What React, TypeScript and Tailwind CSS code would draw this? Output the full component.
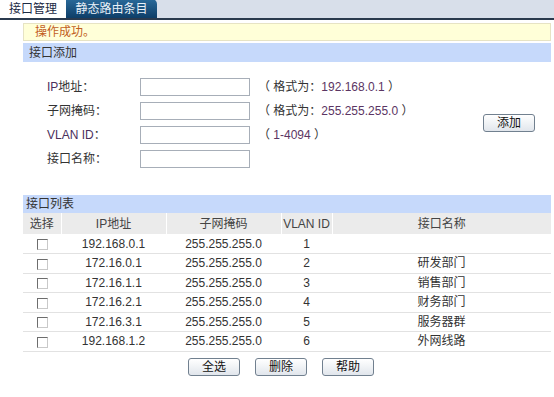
import React from 'react';

// Interface row shape for the list table
interface IfaceRow {
  ip: string;
  mask: string;
  vlan: number;
  name: string;
}

const rows: IfaceRow[] = [
  { ip: '192.168.0.1', mask: '255.255.255.0', vlan: 1, name: '' },
  { ip: '172.16.0.1', mask: '255.255.255.0', vlan: 2, name: '研发部门' },
  { ip: '172.16.1.1', mask: '255.255.255.0', vlan: 3, name: '销售部门' },
  { ip: '172.16.2.1', mask: '255.255.255.0', vlan: 4, name: '财务部门' },
  { ip: '172.16.3.1', mask: '255.255.255.0', vlan: 5, name: '服务器群' },
  { ip: '192.168.1.2', mask: '255.255.255.0', vlan: 6, name: '外网线路' },
];

function Btn({ label }: { label: string }) {
  return (
    <button className="h-[18px] w-[52px] rounded-[3px] border border-[#71808f] bg-gradient-to-b from-white to-[#e1e6ec] text-[12px] leading-none text-[#111]">
      {label}
    </button>
  );
}

function Checkbox() {
  return (
    <span className="inline-block h-[11px] w-[11px] border border-t-[#6d6d6d] border-l-[#6d6d6d] border-b-[#c9c9c9] border-r-[#c9c9c9] bg-white align-middle" />
  );
}

function FormRow({ label, hint }: { label: React.ReactNode; hint?: React.ReactNode }) {
  return (
    <div className="flex h-[18px] items-center">
      <div className="w-[117px] pl-[24px] text-[#333]">{label}</div>
      <input className="h-[18px] w-[110px] border border-[#a7aeb8] bg-white outline-none" />
      {hint && <div className="ml-[8px] text-[#333]">{hint}</div>}
    </div>
  );
}

export default function App() {
  return (
    <div
      className="h-[397px] w-[554px] bg-white text-[12px] leading-[14px]"
      style={{ fontFamily: '"Liberation Sans", "Noto Sans CJK SC", sans-serif' }}
    >
      {/* tab strip */}
      <div className="flex h-[20px] items-end border-b-2 border-[#2a3a4e] bg-[#d8dfea]">
        <div className="flex h-[19px] w-[66px] items-center justify-center bg-white text-[#1b2a44]">接口管理</div>
        <div className="flex h-[19px] w-[91px] items-center justify-center rounded-tr-[5px] bg-gradient-to-b from-[#2a6a9a] to-[#0d3e68] text-[#e8f0f8]">
          静态路由条目
        </div>
      </div>

      <div className="ml-[23px] mr-[3px]">
        <div className="mt-[3px] flex h-[18px] items-center border border-[#e6e3c4] bg-[#ffffd8] pl-[11px] text-[#c2601e]">
          操作成功。
        </div>
        <div className="mt-[2px] flex h-[19px] items-center bg-[#c6d9fb] pl-[6px] text-[#333]">接口添加</div>

        {/* add form */}
        <div className="mt-[16px] flex items-center">
          <div className="flex flex-col gap-[6px]">
            <FormRow
              label={<><span className="text-[#4a2f5c]">IP</span>地址：</>}
              hint={<>（ 格式为：<span className="text-[#5b3563]">192.168.0.1</span> ）</>}
            />
            <FormRow
              label="子网掩码："
              hint={<>（ 格式为：<span className="text-[#5b3563]">255.255.255.0</span> ）</>}
            />
            <FormRow
              label={<><span className="text-[#4a2f5c]">VLAN ID</span>：</>}
              hint={<>（ <span className="text-[#5b3563]">1-4094</span> ）</>}
            />
            <FormRow label="接口名称：" />
          </div>
          <div className="ml-auto mr-[16px]">
            <Btn label="添加" />
          </div>
        </div>

        <div className="mt-[27px] flex h-[18px] items-center bg-[#c6d9fb] pl-[3px] text-[#333]">接口列表</div>

        {/* interface list */}
        <table className="w-full table-fixed border-collapse text-[#333]">
          <colgroup>
            <col className="w-[38px]" />
            <col className="w-[105px]" />
            <col className="w-[115px]" />
            <col className="w-[51px]" />
            <col />
          </colgroup>
          <thead>
            <tr className="h-[21px] bg-[#ebebeb] text-[#444]">
              <th className="border-r border-white font-normal">选择</th>
              <th className="border-r border-white font-normal">IP地址</th>
              <th className="border-r border-white font-normal">子网掩码</th>
              <th className="border-r border-white font-normal">VLAN ID</th>
              <th className="font-normal">接口名称</th>
            </tr>
          </thead>
          <tbody>
            {rows.map((r) => (
              <tr key={r.vlan} className="h-[19.5px] border-b border-[#e2e2e2] text-center">
                <td><Checkbox /></td>
                <td>{r.ip}</td>
                <td>{r.mask}</td>
                <td>{r.vlan}</td>
                <td>{r.name}</td>
              </tr>
            ))}
          </tbody>
        </table>

        <div className="mt-[6px] flex gap-[15px] pl-[165px]">
          <Btn label="全选" />
          <Btn label="删除" />
          <Btn label="帮助" />
        </div>
      </div>
    </div>
  );
}
